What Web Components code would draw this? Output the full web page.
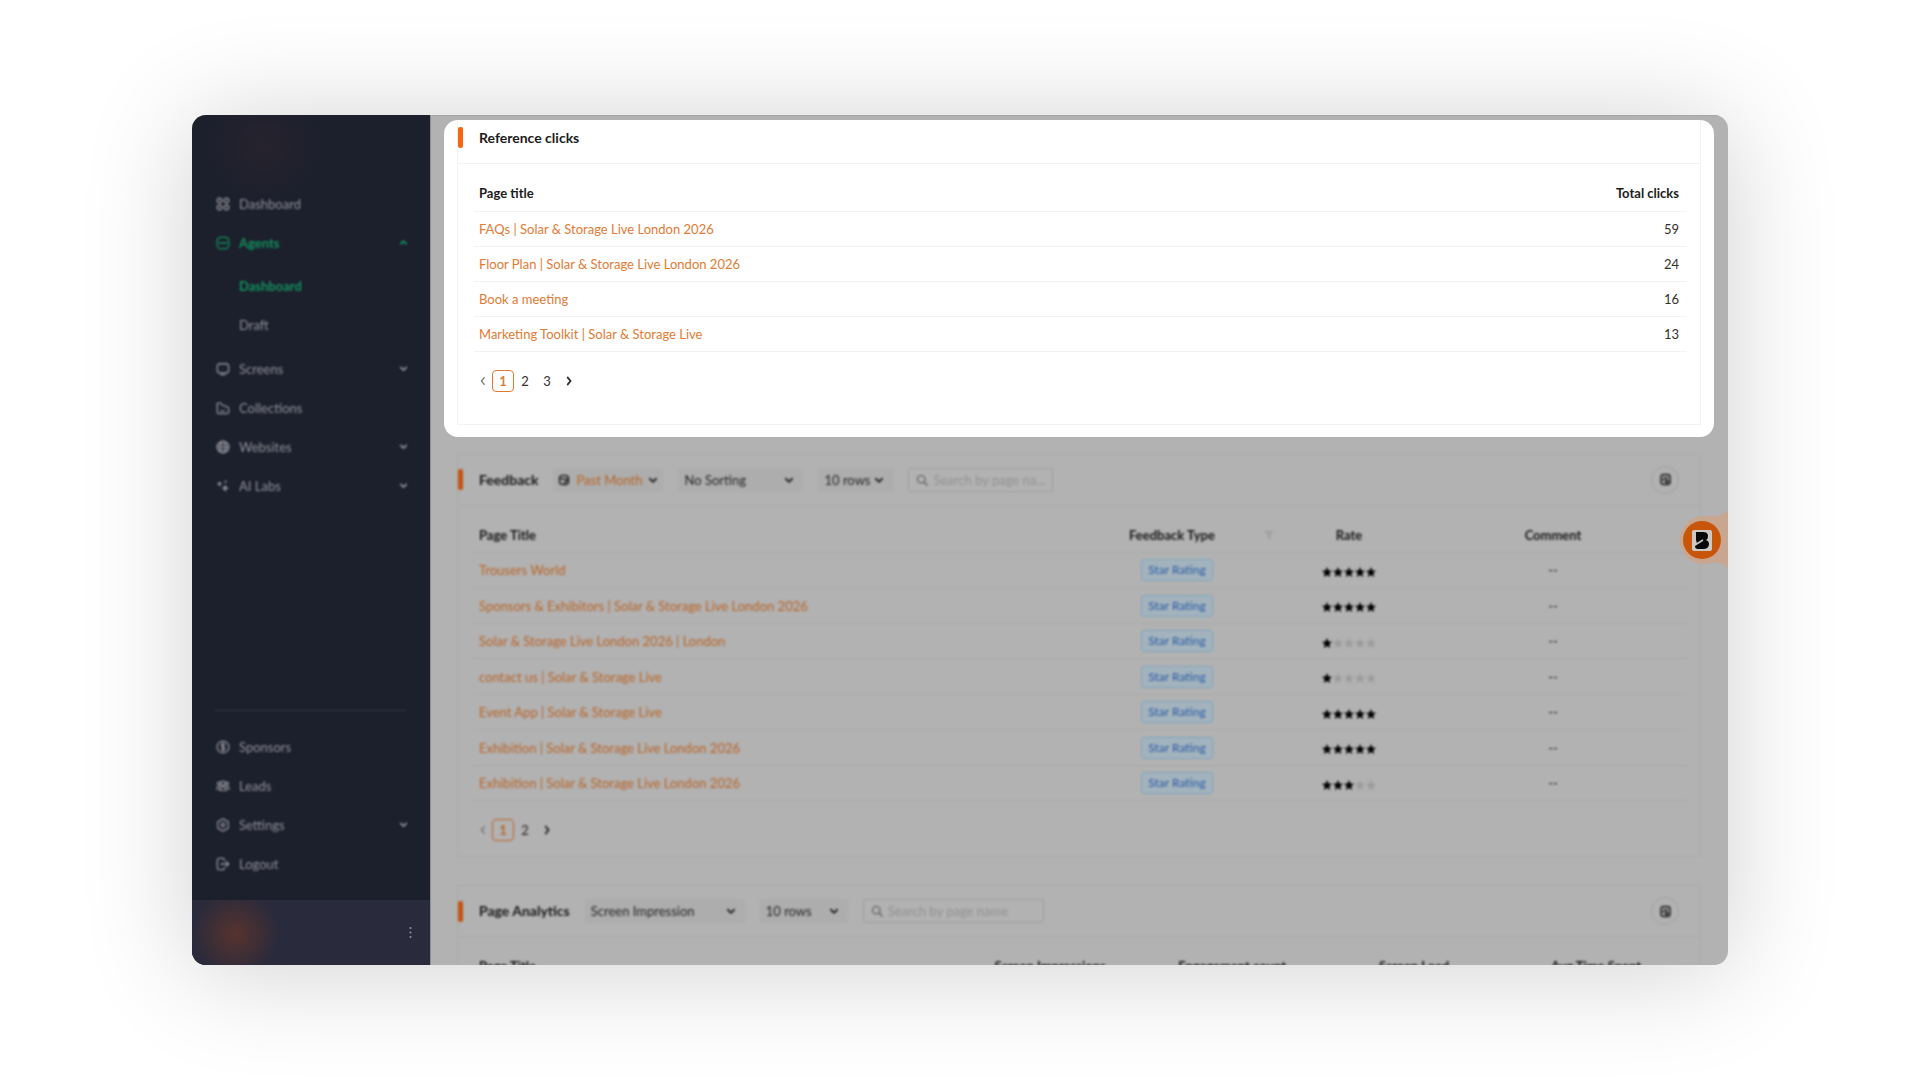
<!DOCTYPE html>
<html lang="en">
<head>
<meta charset="utf-8">
<meta name="viewport" content="width=device-width, initial-scale=1">
<title>Agents Dashboard</title>
<style>
    * { box-sizing: border-box; }
    body {
        margin: 0;
        min-height: 100vh;
        padding: 115px 10vw;
        background: #fff;
        font: 13px/18px Lato, "Open Sans", sans-serif;
        --accent: #b96427;
        --bar: #c25510;
        --ink: #262626;
        --strong: #161616;
        --line: #ababab;
        --muted: #707070;
    }
</style>
</head>
<body>
<app-window>
    <side-bar slot="side"></side-bar>

    <spot-light>
        <panel-card heading="Reference clicks" class="roomy">
            <clicks-table></clicks-table>
            <page-nav pages="3" label="Reference clicks pages"></page-nav>
        </panel-card>
    </spot-light>

    <panel-card heading="Feedback" class="dim">
        <date-button slot="tools">Past Month</date-button>
        <pick-list slot="tools" label="Sorting" value="No Sorting" style="width:125px"></pick-list>
        <pick-list slot="tools" label="Rows" value="10 rows" style="width:75px"></pick-list>
        <search-box slot="tools" hint="Search by page na..." style="width:145px"></search-box>
        <export-button slot="end"></export-button>
        <feedback-table></feedback-table>
        <page-nav pages="2" label="Feedback pages"></page-nav>
    </panel-card>

    <panel-card heading="Page Analytics" class="dim">
        <pick-list slot="tools" label="Metric" value="Screen Impression" style="width:160px"></pick-list>
        <pick-list slot="tools" label="Rows" value="10 rows" style="width:88px"></pick-list>
        <search-box slot="tools" hint="Search by page name" style="width:181px"></search-box>
        <export-button slot="end"></export-button>
        <analytics-table></analytics-table>
    </panel-card>

    <help-badge slot="badge"></help-badge>
</app-window>

<script>
const icons = {
    grid: '<circle cx="4" cy="4" r="2.6"/><circle cx="12" cy="4" r="2.6"/><circle cx="4" cy="12" r="2.6"/><circle cx="12" cy="12" r="2.6"/>',
    agent: '<rect x="1.5" y="1.5" width="13" height="13" rx="4"/><path d="M4 8h2.5M9.500 8H12M6.500 8h3"/>',
    screen: '<rect x="1.500" y="2" width="13" height="10.500" rx="3.500"/><path d="M5.500 14.500h5"/>',
    folder: '<path d="M1.500 13V2.500h4l2 2.500 5 1.500q2 .8 2 2.500v3.500q0 2-2 2h-9q-2 0-2-1.500zM5 11.500h5"/>',
    globe: '<circle cx="8" cy="8" r="6.700"/><ellipse cx="8" cy="8" rx="3" ry="6.700"/><path d="M1.300 8h13.400M2.500 4.500h11M2.500 11.500h11"/>',
    spark: '<g fill="currentColor" stroke="none"><path d="M4 2l1 2.500L7.500 5.500 5 6.500 4 9 3 6.500.5 5.500 3 4.500z"/><path d="M10.500 6l1.300 3.200L15 10.500l-3.200 1.300L10.500 15l-1.300-3.200L6 10.500l3.200-1.300z"/><circle cx="11" cy="3" r="1.300"/></g>',
    coin: '<circle cx="8" cy="8" r="6.700"/><path d="M10 5.500Q8 4 6.500 5.500T8 8t1.500 2.500T6 10.500M8 3v10"/>',
    people: '<circle cx="8" cy="5" r="2.500"/><circle cx="3.500" cy="5.500" r="1.800"/><circle cx="12.500" cy="5.500" r="1.800"/><path d="M4 13q0-4 4-4t4 4zM1 12q0-3 2.500-3M15 12q0-3-2.500-3"/>',
    gear: '<path d="M8 1l6 3.500v7L8 15l-6-3.500v-7z"/><circle cx="8" cy="8" r="2"/>',
    exit: '<path d="M9.500 4V3q0-1.500-1.500-1.500H3.500q-2 0-2 2v9q0 2 2 2H8q1.500 0 1.500-1.500v-1M5.500 8h9M12 5.500L14.500 8 12 10.500"/>',
    down: '<path d="M3 6l5 5 5-5"/>',
    up: '<path d="M3 10.500l5-5 5 5"/>',
    prev: '<path d="M10 2.500L5.500 8l4.500 5.500"/>',
    next: '<path d="M6 2.500l4.500 5.500L6 13.500"/>',
    dots: '<g fill="currentColor" stroke="none"><circle cx="8" cy="2.500" r="1.300"/><circle cx="8" cy="8" r="1.300"/><circle cx="8" cy="13.500" r="1.300"/></g>',
    calendar: '<rect x="2" y="2" width="12" height="12" rx="4"/><path d="M2.500 6.500h11M8.500 13.500q0-4.500 5-4.500"/>',
    search: '<circle cx="7" cy="7" r="5"/><path d="M10.800 10.800L15 15"/>',
    filter: '<path fill="currentColor" d="M2 2h12l-4.500 6v6l-3-2V8z"/>',
    export: '<path d="M13.500 9V5q0-3-3-3H5.500q-3 0-3 3v6q0 3 3 3h6q2 0 2-2V8.500M5 8.500q1-3 5-2.500"/><circle cx="9.500" cy="10.500" r="1.500"/>',
    star: '<path fill="currentColor" stroke="none" d="M8 0l2.400 5.400 5.600.6-4.200 3.900L13 16l-5-3.200L3 16l1.200-6.100L0 6l5.600-.6z"/>'
};

function icon(name, size = 12, width = 1.5) {
    return `<svg aria-hidden="true" viewBox="0 0 16 16" width="${size}" height="${size}" fill="none" stroke="currentColor" stroke-width="${width}" stroke-linecap="round" stroke-linejoin="round">${icons[name]}</svg>`;
}

const reset = `
    * { box-sizing: border-box; }
    svg { display: block; flex: none; }
    button, select, input { margin: 0; font: inherit; color: inherit; }
    button { border: 0; padding: 0; background: none; cursor: pointer; }
    a { color: inherit; text-decoration: none; }
`;

class BaseElement extends HTMLElement {
    connectedCallback() {
        if (this.shadowRoot) return;
        const template = document.createElement('template');
        template.innerHTML = `<style>${reset}${this.css()}</style>${this.html()}`;
        this.attachShadow({ mode: 'open' }).appendChild(template.content.cloneNode(true));
    }
    css() { return ''; }
    html() { return ''; }
}

customElements.define('app-window', class extends BaseElement {
    css() {
        return `
            :host {
                position: relative;
                display: grid;
                grid-template-columns: 238px 1fr;
                height: calc(100vh - 230px);
                min-height: 600px;
                overflow: hidden;
                border-radius: 14px;
                background: #b2b2b2;
                box-shadow: 0 6px 110px rgba(0, 0, 0, .19);
            }
            main {
                min-width: 0;
                overflow: hidden;
                padding: 4px 14px 0 13px;
                border-top: 1px solid #a5a5a5;
                border-left: 1px solid #8d8d90;
            }
        `;
    }
    html() {
        return '<slot name="side"></slot><main><slot></slot></main><slot name="badge"></slot>';
    }
});

customElements.define('side-bar', class extends BaseElement {
    css() {
        return `
            :host {
                display: flex;
                flex-direction: column;
                min-height: 0;
                background: radial-gradient(circle at 30% 30px, #26232e, transparent 60px), #1c1f2c;
                color: #92939b;
            }
            nav { padding: 0 22px 0 24px; filter: blur(1px); }
            .top { margin-top: 69px; }
            .bottom { margin: auto 24px 0 22px; padding: 16px 0 17px 2px; border-top: 1px solid #363944; }
            a { display: flex; align-items: center; gap: 9px; height: 39px; }
            .bottom a { margin-right: -2px; }
            a > span { flex: 1; }
            .sub { padding: 4px 0 5px 23px; }
            .on { color: #12945f; font-weight: 700; }
            footer {
                display: flex;
                align-items: center;
                justify-content: flex-end;
                height: 65px;
                padding-right: 13px;
                background: radial-gradient(circle at 43px 34px, #57332f, transparent 44px), #292a3b;
            }
        `;
    }
    link(name, text, arrow, on) {
        return `<a href="#"${on ? ' class="on"' : ''}>${name ? icon(name, 14) : ''}<span>${text}</span>${arrow ? icon(arrow, 9, 3) : ''}</a>`;
    }
    html() {
        return `
            <nav class="top" aria-label="Main">
                ${this.link('grid', 'Dashboard')}
                ${this.link('agent', 'Agents', 'up', true)}
                <div class="sub">
                    ${this.link('', 'Dashboard', '', true)}
                    ${this.link('', 'Draft')}
                </div>
                ${this.link('screen', 'Screens', 'down')}
                ${this.link('folder', 'Collections')}
                ${this.link('globe', 'Websites', 'down')}
                ${this.link('spark', 'AI Labs', 'down')}
            </nav>
            <nav class="bottom" aria-label="Account">
                ${this.link('coin', 'Sponsors')}
                ${this.link('people', 'Leads')}
                ${this.link('gear', 'Settings', 'down')}
                ${this.link('exit', 'Logout')}
            </nav>
            <footer><button aria-label="Account menu">${icon('dots', 13)}</button></footer>
        `;
    }
});

// Keeps its content at full brightness while the rest of the page is dimmed.
customElements.define('spot-light', class extends BaseElement {
    css() {
        return `
            :host {
                display: block;
                margin-bottom: 17px;
                padding: 0 13px 12px;
                border-radius: 14px;
                overflow: hidden;
                background: #fff;
                --accent: #e07b35;
                --bar: #fb640c;
                --ink: #303030;
                --strong: #1b1b1b;
                --line: #f2f2f2;
                --muted: #777;
            }
        `;
    }
    html() { return '<slot></slot>'; }
});

customElements.define('panel-card', class extends BaseElement {
    css() {
        return `
            :host { display: block; border: 1px solid var(--line); border-top: 0; color: var(--ink); }
            :host(.dim) { margin: 0 13px 28px; border-top: 1px solid var(--line); filter: blur(1px); }
            :host(.roomy) { padding-bottom: 17px; }
            :host(.roomy) header { height: 44px; padding-bottom: 8px; }
            header {
                display: flex;
                align-items: center;
                gap: 15px;
                height: 51px;
                padding-right: 21px;
                border-bottom: 1px solid var(--line);
            }
            h2 {
                display: flex;
                align-items: center;
                gap: 16px;
                margin: 0;
                color: var(--strong);
                font-size: 14px;
                font-weight: 700;
            }
            h2::before { content: ""; width: 5px; height: 21px; border-radius: 2px; background: var(--bar); }
            .end { margin-left: auto; }
            section { padding: 12px 13px 15px 16px; }
        `;
    }
    html() {
        return `
            <header>
                <h2>${this.getAttribute('heading')}</h2>
                <slot name="tools"></slot>
                <div class="end"><slot name="end"></slot></div>
            </header>
            <section><slot></slot></section>
        `;
    }
});

class DataTable extends BaseElement {
    css() {
        return `
            :host { display: block; }
            table { width: 100%; border-collapse: collapse; table-layout: fixed; }
            th, td { height: 35px; padding: 0 5px; border-bottom: 1px solid var(--line); text-align: center; }
            th { color: var(--strong); font-weight: 700; }
            th:first-child, td:first-child { text-align: left; }
            td a { color: var(--accent); }
        `;
    }
    html() {
        const cols = this.columns.map(([label, width]) => `<th scope="col" style="width:${width}">${label}</th>`);
        const rows = this.rows.map(row => `<tr>${row.map(cell => `<td>${cell}</td>`).join('')}</tr>`);
        return `<table><thead><tr>${cols.join('')}</tr></thead><tbody>${rows.join('')}</tbody></table>`;
    }
}

customElements.define('clicks-table', class extends DataTable {
    columns = [['Page title', '60%'], ['Total clicks', '40%']];
    rows = [
        ['FAQs | Solar &amp; Storage Live London 2026', 59],
        ['Floor Plan | Solar &amp; Storage Live London 2026', 24],
        ['Book a meeting', 16],
        ['Marketing Toolkit | Solar &amp; Storage Live', 13]
    ].map(([title, clicks]) => [`<a href="#">${title}</a>`, clicks]);
    css() {
        return super.css() + 'th:last-child, td:last-child { padding-right: 8px; text-align: right; }';
    }
});

customElements.define('feedback-table', class extends DataTable {
    columns = [
        ['Page Title', 'auto'],
        [`<div class="filter"><span>Feedback Type</span><button aria-label="Filter">${icon('filter', 10)}</button></div>`, '204px'],
        ['Rate', '140px'],
        ['Comment', '268px']
    ];
    rows = [
        ['Trousers World', 5],
        ['Sponsors &amp; Exhibitors | Solar &amp; Storage Live London 2026', 5],
        ['Solar &amp; Storage Live London 2026 | London', 1],
        ['contact us | Solar &amp; Storage Live', 1],
        ['Event App | Solar &amp; Storage Live', 5],
        ['Exhibition | Solar &amp; Storage Live London 2026', 5],
        ['Exhibition | Solar &amp; Storage Live London 2026', 3]
    ].map(([title, rate]) => [
        `<a href="#">${title}</a>`,
        '<span class="tag">Star Rating</span>',
        this.stars(rate),
        '--'
    ]);
    stars(rate) {
        const list = [1, 2, 3, 4, 5].map(n => `<i${n > rate ? ' class="off"' : ''}>${icon('star', 10)}</i>`);
        return `<span class="stars" role="img" aria-label="${rate} of 5">${list.join('')}</span>`;
    }
    css() {
        return super.css() + `
            tr:nth-child(even) td { height: 36px; }
            .filter { display: flex; align-items: center; }
            .filter span { flex: 1; }
            .filter button { color: #a0a0a0; }
            .tag {
                display: inline-block;
                width: 72px;
                border: 1px solid #7fa6bd;
                border-radius: 3px;
                background: #a3b3bd;
                color: #2a5aa5;
                font-size: 12px;
                line-height: 20px;
                vertical-align: middle;
            }
            .stars { display: inline-flex; gap: 1px; color: #000; vertical-align: middle; }
            .off { color: #9c9c9c; }
        `;
    }
});

customElements.define('analytics-table', class extends DataTable {
    columns = [
        ['Page Title', '40%'],
        ['Screen Impressions', '15%'],
        ['Engagement count', '15%'],
        ['Screen Load', '15%'],
        ['Avg Time Spent', '15%']
    ];
    rows = [];
});

customElements.define('page-nav', class extends BaseElement {
    css() {
        return `
            :host { display: block; margin-top: 18px; }
            nav { display: flex; }
            button { display: grid; place-items: center; width: 22px; height: 22px; border: 1px solid transparent; border-radius: 4px; }
            button:first-child { width: 18px; color: var(--muted); }
            [aria-current] { border-color: var(--accent); color: var(--accent); font-weight: 700; }
        `;
    }
    html() {
        let pages = '';
        for (let n = 1; n <= Number(this.getAttribute('pages')); n++) {
            pages += `<button${n === 1 ? ' aria-current="page"' : ''}>${n}</button>`;
        }
        return `
            <nav aria-label="${this.getAttribute('label')}">
                <button aria-label="Previous page">${icon('prev', 10, 2)}</button>
                ${pages}
                <button aria-label="Next page">${icon('next', 10, 3)}</button>
            </nav>
        `;
    }
});

customElements.define('date-button', class extends BaseElement {
    css() {
        return `
            :host { display: block; }
            button { display: flex; align-items: center; gap: 6px; height: 24px; padding: 0 5px; border-radius: 3px; background: #adadad; }
            span { color: var(--accent); }
        `;
    }
    html() {
        return `<button>${icon('calendar', 12, 2)}<span><slot></slot></span>${icon('down', 10, 3)}</button>`;
    }
});

customElements.define('pick-list', class extends BaseElement {
    css() {
        return `
            :host { display: block; }
            label { display: grid; align-items: center; }
            select, svg { grid-area: 1 / 1; }
            select { width: 100%; height: 24px; padding: 0 20px 0 6px; border: 0; border-radius: 3px; background: #adadad; appearance: none; }
            svg { justify-self: end; margin-right: 9px; pointer-events: none; }
        `;
    }
    html() {
        return `
            <label>
                <select aria-label="${this.getAttribute('label')}"><option>${this.getAttribute('value')}</option></select>
                ${icon('down', 10, 3)}
            </label>
        `;
    }
});

customElements.define('search-box', class extends BaseElement {
    css() {
        return `
            :host { display: block; }
            label { display: flex; align-items: center; gap: 5px; height: 24px; padding: 0 2px 0 7px; border: 1px solid #9e9e9e; border-radius: 3px; color: #555; }
            input { flex: 1; min-width: 0; padding: 0; border: 0; outline: 0; background: none; }
            input::placeholder { color: #929292; }
        `;
    }
    html() {
        return `<label>${icon('search', 12)}<input type="text" aria-label="Search" placeholder="${this.getAttribute('hint')}"></label>`;
    }
});

customElements.define('export-button', class extends BaseElement {
    css() {
        return `
            :host { display: block; }
            button { display: grid; place-items: center; width: 28px; height: 28px; border: 1px solid #a0a0a0; border-radius: 50%; }
        `;
    }
    html() { return `<button aria-label="Export">${icon('export', 13, 2)}</button>`; }
});

customElements.define('help-badge', class extends BaseElement {
    css() {
        return `
            :host { position: absolute; top: calc(50% - 34px); right: 0; }
        `;
    }
    html() {
        return `
            <button aria-label="Open assistant">
                <svg aria-hidden="true" viewBox="0 0 52 68" width="52" height="68">
                    <path d="M52 4Q46 11 36 10H26A24 24 0 1 0 30 58Q45 54 52 62Z" fill="#c9a68f"/>
                    <circle cx="26" cy="34" r="19" fill="#c8560a"/>
                    <rect x="16" y="24" width="20" height="21" rx="2" fill="#c9c9c5"/>
                    <path d="M20 26h7q5 0 5 4 0 3-2 4 3 1 3 4 0 5-6 5h-5q-3 0-3-3l2-2-1-4z" fill="#080808"/>
                    <path d="M19 39l8-5" stroke="#c9c9c5" stroke-width="1.500"/>
                </svg>
            </button>
        `;
    }
});
</script>
</body>
</html>
